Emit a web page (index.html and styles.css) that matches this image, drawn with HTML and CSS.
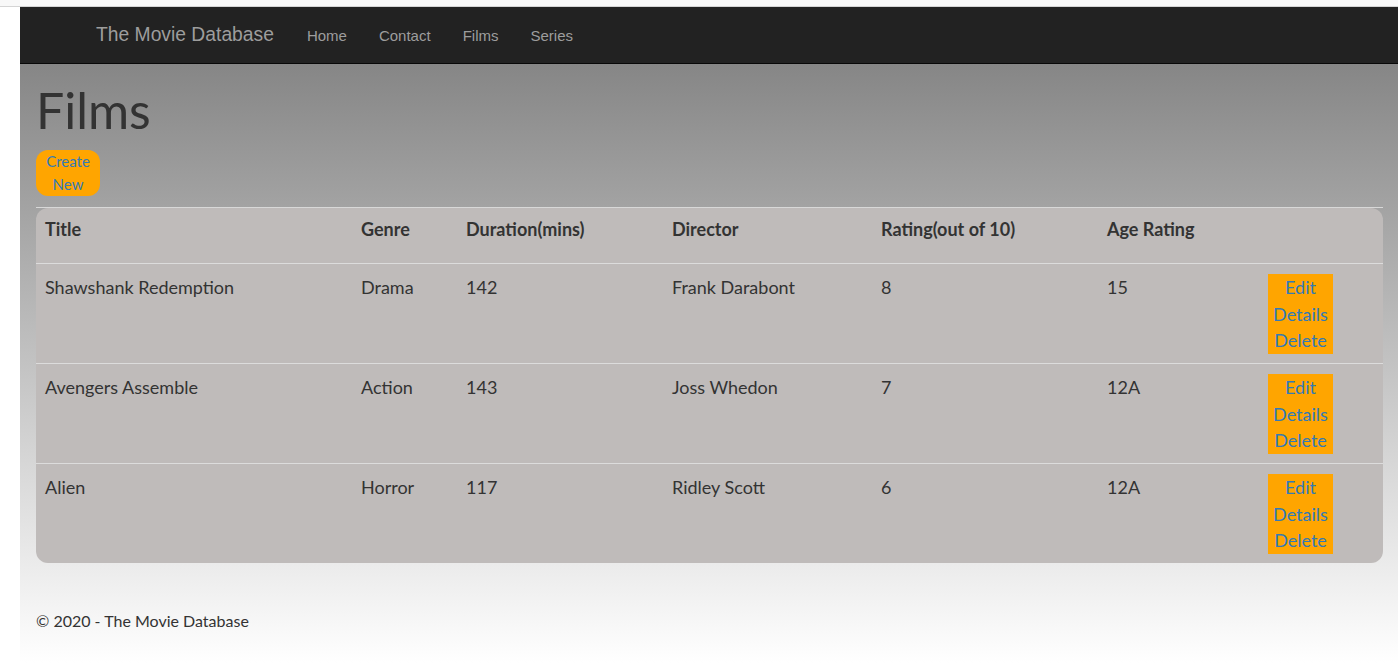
FILE: index.html
```html
<!DOCTYPE html>
<html>
<head>
<meta charset="utf-8">
<title>Films - The Movie Database</title>
<link rel="stylesheet" href="styles.css">
</head>
<body>
<div class="chrome"></div>
<div class="page">
  <nav class="navbar">
    <a class="brand" href="#">The Movie Database</a>
    <ul class="nav">
      <li><a href="#">Home</a></li>
      <li><a href="#">Contact</a></li>
      <li><a href="#">Films</a></li>
      <li><a href="#">Series</a></li>
    </ul>
  </nav>
  <main class="main">
    <h1 class="title">Films</h1>
    <a class="create" href="#">Create New</a>
    <div class="table-wrap">
      <table class="films">
        <colgroup>
          <col class="c-title"><col class="c-genre"><col class="c-dur"><col class="c-dir"><col class="c-rating"><col class="c-age"><col class="c-act">
        </colgroup>
        <thead>
          <tr>
            <th>Title</th><th>Genre</th><th>Duration(mins)</th><th>Director</th><th>Rating(out of 10)</th><th>Age Rating</th><th></th>
          </tr>
        </thead>
        <tbody>
          <tr>
            <td>Shawshank Redemption</td><td>Drama</td><td>142</td><td>Frank Darabont</td><td>8</td><td>15</td>
            <td><div class="actions"><a href="#">Edit</a><a href="#">Details</a><a href="#">Delete</a></div></td>
          </tr>
          <tr>
            <td>Avengers Assemble</td><td>Action</td><td>143</td><td>Joss Whedon</td><td>7</td><td>12A</td>
            <td><div class="actions"><a href="#">Edit</a><a href="#">Details</a><a href="#">Delete</a></div></td>
          </tr>
          <tr>
            <td>Alien</td><td>Horror</td><td>117</td><td>Ridley Scott</td><td>6</td><td>12A</td>
            <td><div class="actions"><a href="#">Edit</a><a href="#">Details</a><a href="#">Delete</a></div></td>
          </tr>
        </tbody>
      </table>
    </div>
    <footer class="footer">&copy; 2020 - The Movie Database</footer>
  </main>
</div>
</body>
</html>
```
FILE: styles.css
```css
html, body {
  margin: 0;
  padding: 0;
  background: #ffffff;
  height: 100%;
}
body {
  font-family: "Lato", "Open Sans", sans-serif;
  color: #333333;
}
.chrome {
  height: 6px;
  background: #f8f8f8;
  border-bottom: 1px solid #d4d4d4;
}
.page {
  margin-left: 20px;
  min-height: 656px;
  display: flex;
  flex-direction: column;
}
.navbar {
  height: 56px;
  background: #222222;
  border-bottom: 1px solid #080808;
  display: flex;
  align-items: center;
  padding-left: 76px;
  font-family: "Liberation Sans", Arial, sans-serif;
}
.brand {
  color: #9d9d9d;
  font-size: 19.3px;
  text-decoration: none;
  margin-right: 17px;
}
.nav {
  list-style: none;
  margin: 0;
  padding: 0;
  display: flex;
}
.nav a {
  display: block;
  color: #9d9d9d;
  font-size: 15px;
  text-decoration: none;
  padding: 0 16px;
}
.main {
  flex: 1;
  background: linear-gradient(to bottom, #868686 0%, #ffffff 100%);
  padding: 0 15px 0 16px;
}
.title {
  margin: 16px 0 0 0;
  font-size: 50px;
  font-weight: 400;
  line-height: 60px;
  color: #333333;
}
.create {
  display: block;
  width: 64px;
  height: 46px;
  box-sizing: border-box;
  margin-top: 10px;
  background: #ffa500;
  border-radius: 12px;
  color: #337ab7;
  font-size: 15px;
  line-height: 23px;
  text-align: center;
  text-decoration: none;
  word-spacing: 40px;
}
.table-wrap {
  margin-top: 11px;
  border-top: 1px solid #d8d8d8;
}
.films {
  width: 100%;
  table-layout: fixed;
  border-collapse: separate;
  border-spacing: 0;
  background: #bfbbba;
  border-radius: 12px;
  font-size: 18px;
  color: #333333;
}
.c-title { width: 316px; }
.c-genre { width: 105px; }
.c-dur { width: 206px; }
.c-dir { width: 209px; }
.c-rating { width: 226px; }
.c-age { width: 161px; }
.c-act { width: 124px; }
.films th {
  text-align: left;
  font-weight: 700;
  height: 56px;
  box-sizing: border-box;
  padding: 8px 9px 10px 9px;
  vertical-align: top;
  line-height: 26px;
  border-bottom: 1px solid #dcdcdc;
}
.films td {
  padding: 10px 9px 9px 9px;
  vertical-align: top;
  line-height: 26px;
  border-bottom: 1px solid #dcdcdc;
}
.films tbody tr:last-child td {
  border-bottom: none;
}
.actions {
  width: 65px;
  background: #ffa500;
  text-align: center;
}
.actions a {
  display: block;
  height: 26.67px;
  line-height: 26.67px;
  color: #337ab7;
  text-decoration: none;
}
.footer {
  margin-top: 48px;
  font-size: 16px;
  line-height: 20px;
  color: #333333;
}
```
